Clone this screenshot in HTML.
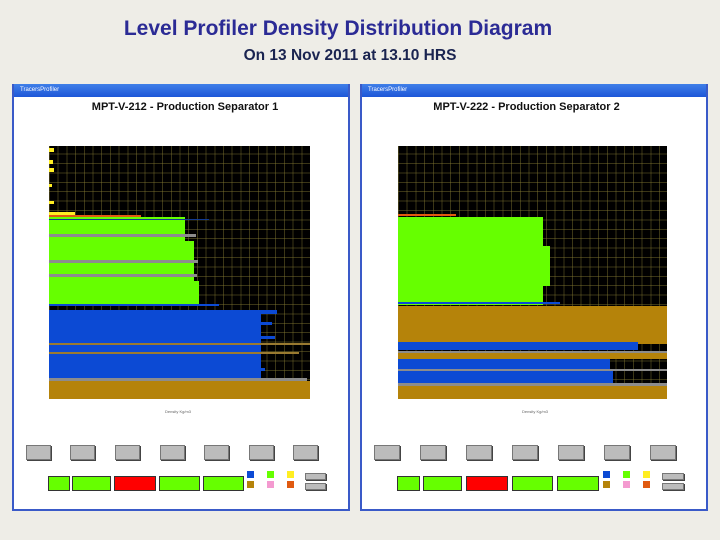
<!DOCTYPE html><html><head><style>
*{margin:0;padding:0;box-sizing:border-box}
body{width:720px;height:540px;background:#eeede7;position:relative;overflow:hidden;font-family:"Liberation Sans",sans-serif}
.a{position:absolute}
.t1{left:0;width:676px;top:17px;text-align:center;font-size:21px;font-weight:bold;color:#2b2b95;white-space:nowrap}
.t2{left:0;width:700px;top:47px;text-align:center;font-size:15.5px;font-weight:bold;color:#1a2450;white-space:nowrap}
.win{background:#fff;border:2px solid #3a5ac8;border-top:none}
.tb{background:linear-gradient(#3f7fe8,#1d56d8);height:13px;color:#fff;font-size:6px;padding-left:6px;line-height:13px}
.ht{font-size:11px;font-weight:bold;text-align:center;color:#111}
.plot{background-color:#000;background-image:repeating-linear-gradient(90deg,rgba(130,120,50,.45) 0 1px,transparent 1px 8.7px),repeating-linear-gradient(0deg,rgba(130,120,50,.45) 0 1px,transparent 1px 9.4px);overflow:hidden}
.plot div{position:absolute;left:0}
.g{background:#66ff00}.b{background:#0c4ad4}.br{background:#b5830a}.gr{background:#8c8c8c}.y{background:#ffee22}.o{background:#e05a10}
.btn{background:#bcbcbc;border:1px solid #777;box-shadow:1px 1px 0 #444;height:15px}
.gb{background:#66ff00;border:1px solid #333;height:15px}
.lg{width:7px;height:7px}
.ax{font-size:4px;color:#666}
</style></head><body>
<div class="a t1">Level Profiler Density Distribution Diagram</div>
<div class="a t2">On 13 Nov 2011 at 13.10 HRS</div>

<div class="a win" style="left:12px;top:84px;width:338px;height:427px"><div class="tb">TracersProfiler</div></div>
<div class="a ht" style="left:12px;top:101px;width:346px">MPT-V-212 - Production Separator 1</div>
<div class="a plot" style="left:49px;top:146px;width:261px;height:253px">
<div class="y" style="top:2px;width:5px;height:4px"></div><div class="y" style="top:14px;width:4px;height:4px"></div><div class="y" style="top:22px;width:5px;height:4px"></div><div class="y" style="top:38px;width:3px;height:3px"></div><div class="y" style="top:55px;width:5px;height:3px"></div>
<div class="y" style="top:66px;width:26px;height:3px"></div>
<div class="o" style="top:69px;width:92px;height:2px"></div>
<div class="g" style="top:71px;width:136px;height:88px"></div>
<div class="b" style="top:73px;width:160px;height:1px;background:#123a90"></div>
<div class="g" style="top:95px;width:145px;height:40px"></div>
<div class="gr" style="top:88px;width:147px;height:3px"></div>
<div class="gr" style="top:114px;width:149px;height:3px"></div>
<div class="gr" style="top:128px;width:148px;height:3px"></div>
<div class="g" style="top:135px;width:150px;height:24px"></div>
<div class="b" style="top:158px;width:170px;height:2px"></div>
<div class="b" style="top:164px;width:228px;height:4px"></div>
<div class="b" style="top:166px;width:212px;height:66px"></div>
<div class="b" style="top:176px;width:223px;height:3px"></div>
<div class="b" style="top:190px;width:226px;height:3px"></div>
<div class="gr" style="top:197px;width:261px;height:2px;background:#9a7a30"></div>
<div class="gr" style="top:206px;width:250px;height:2px;background:#9a7a30"></div>
<div class="b" style="top:222px;width:216px;height:3px"></div>
<div class="gr" style="top:232px;width:258px;height:3px"></div>
<div class="br" style="top:235px;width:261px;height:18px"></div>
</div>
<div class="a ax" style="left:165px;top:409px">Density Kg/m3</div>

<div class="a btn" style="left:26px;top:445px;width:25px"></div>
<div class="a btn" style="left:70px;top:445px;width:25px"></div>
<div class="a btn" style="left:115px;top:445px;width:25px"></div>
<div class="a btn" style="left:160px;top:445px;width:25px"></div>
<div class="a btn" style="left:204px;top:445px;width:25px"></div>
<div class="a btn" style="left:249px;top:445px;width:25px"></div>
<div class="a btn" style="left:293px;top:445px;width:25px"></div>
<div class="a gb" style="left:48px;top:476px;width:22px"></div>
<div class="a gb" style="left:72px;top:476px;width:39px"></div>
<div class="a gb" style="left:114px;top:476px;width:42px;background:#f00"></div>
<div class="a gb" style="left:159px;top:476px;width:41px"></div>
<div class="a gb" style="left:203px;top:476px;width:41px"></div>
<div class="a lg b" style="left:247px;top:471px"></div><div class="a lg g" style="left:267px;top:471px"></div><div class="a lg y" style="left:287px;top:471px"></div>
<div class="a lg br" style="left:247px;top:481px"></div><div class="a lg" style="left:267px;top:481px;background:#f49ad0"></div><div class="a lg o" style="left:287px;top:481px"></div>
<div class="a btn" style="left:305px;top:473px;width:21px;height:7px"></div>
<div class="a btn" style="left:305px;top:483px;width:21px;height:7px"></div>

<div class="a win" style="left:360px;top:84px;width:348px;height:427px"><div class="tb">TracersProfiler</div></div>
<div class="a ht" style="left:360px;top:101px;width:333px">MPT-V-222 - Production Separator 2</div>
<div class="a plot" style="left:398px;top:146px;width:269px;height:253px">
<div class="o" style="top:68px;width:58px;height:2px"></div>
<div class="g" style="top:71px;width:145px;height:88px"></div>
<div class="g" style="top:100px;width:152px;height:40px"></div>
<div class="b" style="top:156px;width:162px;height:2px"></div>
<div class="b" style="top:177px;width:170px;height:3px"></div>
<div class="br" style="top:160px;width:269px;height:38px"></div>
<div class="b" style="top:196px;width:240px;height:8px"></div>
<div class="gr" style="top:205px;width:269px;height:2px"></div>
<div class="br" style="top:207px;width:269px;height:6px"></div>
<div class="b" style="top:213px;width:212px;height:10px"></div>
<div class="gr" style="top:223px;width:269px;height:2px"></div>
<div class="b" style="top:225px;width:215px;height:12px"></div>
<div class="gr" style="top:237px;width:269px;height:3px"></div>
<div class="br" style="top:240px;width:269px;height:13px"></div>
</div>
<div class="a ax" style="left:522px;top:409px">Density Kg/m3</div>

<div class="a btn" style="left:374px;top:445px;width:26px"></div>
<div class="a btn" style="left:420px;top:445px;width:26px"></div>
<div class="a btn" style="left:466px;top:445px;width:26px"></div>
<div class="a btn" style="left:512px;top:445px;width:26px"></div>
<div class="a btn" style="left:558px;top:445px;width:26px"></div>
<div class="a btn" style="left:604px;top:445px;width:26px"></div>
<div class="a btn" style="left:650px;top:445px;width:26px"></div>
<div class="a gb" style="left:397px;top:476px;width:23px"></div>
<div class="a gb" style="left:423px;top:476px;width:39px"></div>
<div class="a gb" style="left:466px;top:476px;width:42px;background:#f00"></div>
<div class="a gb" style="left:512px;top:476px;width:41px"></div>
<div class="a gb" style="left:557px;top:476px;width:42px"></div>
<div class="a lg b" style="left:603px;top:471px"></div><div class="a lg g" style="left:623px;top:471px"></div><div class="a lg y" style="left:643px;top:471px"></div>
<div class="a lg br" style="left:603px;top:481px"></div><div class="a lg" style="left:623px;top:481px;background:#f49ad0"></div><div class="a lg o" style="left:643px;top:481px"></div>
<div class="a btn" style="left:662px;top:473px;width:22px;height:7px"></div>
<div class="a btn" style="left:662px;top:483px;width:22px;height:7px"></div>
</body></html>
